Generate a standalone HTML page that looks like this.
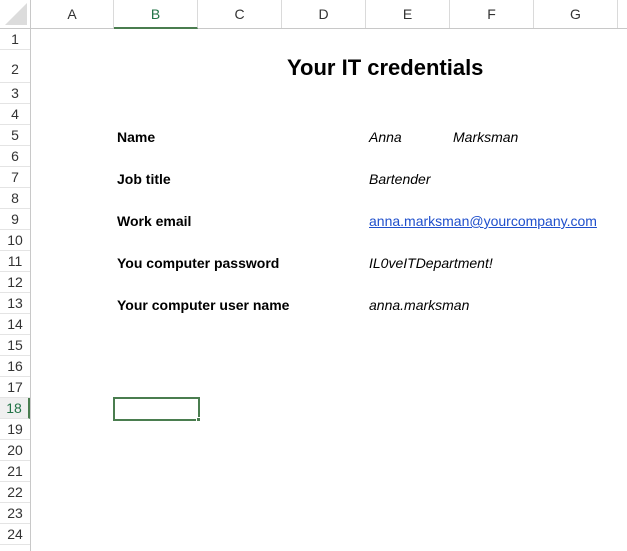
<!DOCTYPE html>
<html><head><meta charset="utf-8"><style>
*{margin:0;padding:0;box-sizing:border-box}
body{width:627px;height:551px;background:#fff;position:relative;overflow:hidden;font-family:"Liberation Sans",sans-serif;color:#000}
.hdr{position:absolute;top:0;left:0;width:627px;height:29px;background:#fff;border-bottom:1px solid #c8c8c8}
.col{position:absolute;top:0;height:28px;border-right:1px solid #dadada;text-align:center;line-height:29px;font-size:14px;color:#333}
.rowh{position:absolute;left:0;top:29px;width:31px;height:522px;border-right:1px solid #c8c8c8;background:#fff}
.rn{position:absolute;left:0;width:30px;text-align:center;font-size:14px;color:#333;border-bottom:1px solid #e4e4e4}
.t{position:absolute;font-size:14px;white-space:nowrap}
.b{font-weight:bold}
.i{font-style:italic}
</style></head><body>
<div class="hdr">
<div class="col" style="left:0;width:31px;border-right:1px solid #c8c8c8"><div style="position:absolute;right:3px;bottom:3px;width:0;height:0;border-left:22px solid transparent;border-bottom:22px solid #dcdcdc"></div></div>
<div class="col" style="left:31px;width:83px">A</div>
<div class="col" style="left:114px;width:84px;color:#217346;border-bottom:2px solid #4a7d4f;height:29px">B</div>
<div class="col" style="left:198px;width:84px">C</div>
<div class="col" style="left:282px;width:84px">D</div>
<div class="col" style="left:366px;width:84px">E</div>
<div class="col" style="left:450px;width:84px">F</div>
<div class="col" style="left:534px;width:84px">G</div>
</div>
<div class="rowh">
<div class="rn" style="top:0;height:21px;line-height:21px">1</div>
<div class="rn" style="top:21px;height:33px;line-height:38px">2</div>
<div class="rn" style="top:54px;height:21px;line-height:21px">3</div>
<div class="rn" style="top:75px;height:21px;line-height:21px">4</div>
<div class="rn" style="top:96px;height:21px;line-height:21px">5</div>
<div class="rn" style="top:117px;height:21px;line-height:21px">6</div>
<div class="rn" style="top:138px;height:21px;line-height:21px">7</div>
<div class="rn" style="top:159px;height:21px;line-height:21px">8</div>
<div class="rn" style="top:180px;height:21px;line-height:21px">9</div>
<div class="rn" style="top:201px;height:21px;line-height:21px">10</div>
<div class="rn" style="top:222px;height:21px;line-height:21px">11</div>
<div class="rn" style="top:243px;height:21px;line-height:21px">12</div>
<div class="rn" style="top:264px;height:21px;line-height:21px">13</div>
<div class="rn" style="top:285px;height:21px;line-height:21px">14</div>
<div class="rn" style="top:306px;height:21px;line-height:21px">15</div>
<div class="rn" style="top:327px;height:21px;line-height:21px">16</div>
<div class="rn" style="top:348px;height:21px;line-height:21px">17</div>
<div class="rn" style="top:369px;height:21px;line-height:21px;color:#217346;background:#f0f0f0;border-right:2px solid #4a7d4f">18</div>
<div class="rn" style="top:390px;height:21px;line-height:21px">19</div>
<div class="rn" style="top:411px;height:21px;line-height:21px">20</div>
<div class="rn" style="top:432px;height:21px;line-height:21px">21</div>
<div class="rn" style="top:453px;height:21px;line-height:21px">22</div>
<div class="rn" style="top:474px;height:21px;line-height:21px">23</div>
<div class="rn" style="top:495px;height:21px;line-height:21px">24</div>
</div>
<div class="t b" style="left:287px;top:55px;font-size:22px">Your IT credentials</div>
<div class="t b" style="left:117px;top:129px">Name</div>
<div class="t b" style="left:117px;top:171px">Job title</div>
<div class="t b" style="left:117px;top:213px">Work email</div>
<div class="t b" style="left:117px;top:255px">You computer password</div>
<div class="t b" style="left:117px;top:297px">Your computer user name</div>
<div class="t i" style="left:369px;top:129px">Anna</div>
<div class="t i" style="left:453px;top:129px">Marksman</div>
<div class="t i" style="left:369px;top:171px">Bartender</div>
<div class="t" style="left:369px;top:213px;color:#1f4fcc;text-decoration:underline;font-size:14px">anna.marksman@yourcompany.com</div>
<div class="t i" style="left:369px;top:255px">IL0veITDepartment!</div>
<div class="t i" style="left:369px;top:297px">anna.marksman</div>
<div style="position:absolute;left:113px;top:397px;width:87px;height:24px;border:2px solid #4a7d4f"></div>
<div style="position:absolute;left:196px;top:417px;width:5px;height:5px;background:#4a7d4f;border:1px solid #fff"></div>
</body></html>
